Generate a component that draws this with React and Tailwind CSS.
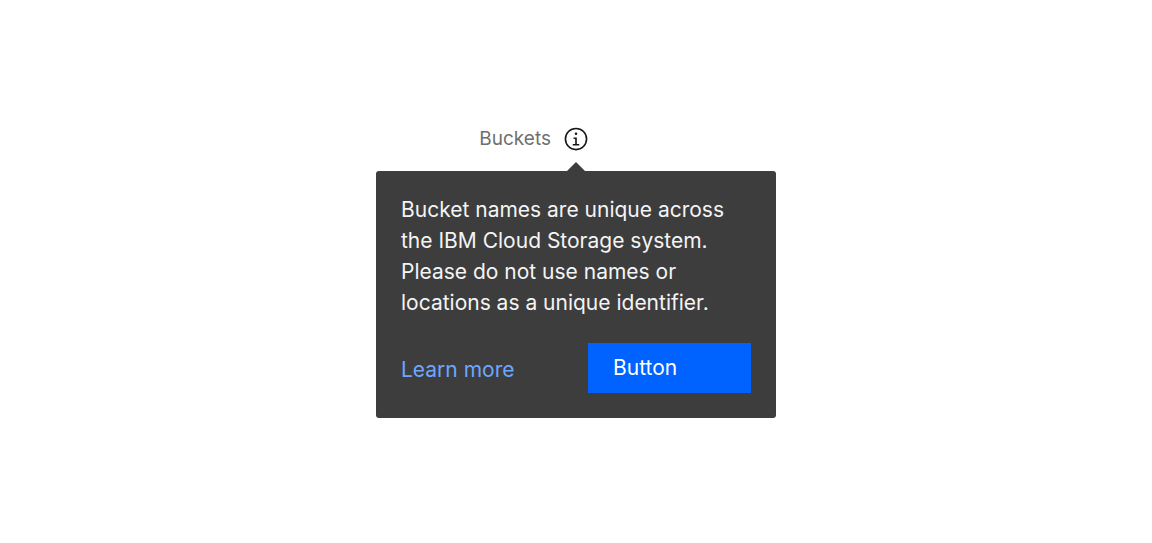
function InformationIcon() {
  return (
    <svg className="size-[26px]" viewBox="0 0 32 32" fill="currentColor" aria-hidden="true">
      <path d="M17 22V14H13V16H15V22H12V24H20V22Z" />
      <path d="M16,8a1.5,1.5,0,1,0,1.5,1.5A1.5,1.5,0,0,0,16,8Z" />
      <path d="M16,30A14,14,0,1,1,30,16,14,14,0,0,1,16,30ZM16,4A12,12,0,1,0,28,16,12,12,0,0,0,16,4Z" />
    </svg>
  );
}

function Toggletip() {
  return (
    <div
      id="buckets-tip"
      className="relative mt-[19px] w-full rounded-[3px] bg-[#3d3d3d] px-[25px] pt-[23px] pb-[25px] text-[21px] leading-[31px] text-[#f4f4f4]"
    >
      <svg
        className="absolute bottom-full left-1/2 h-[9px] w-[18px] -translate-x-1/2 text-[#3d3d3d]"
        viewBox="0 0 18 9"
        fill="currentColor"
        aria-hidden="true"
      >
        <path d="M0 9L9 0L18 9Z" />
      </svg>
      <p>
        Bucket names are unique across the IBM Cloud Storage system. Please do not use names or
        locations as a unique identifier.
      </p>
      <div className="mt-[25px] flex items-end justify-between">
        <a href="#learn-more" className="pb-2 text-[#6ea6ff]">
          Learn more
        </a>
        <button type="button" className="h-[50px] w-[163px] bg-[#0062ff] px-[25px] text-left text-white">
          Button
        </button>
      </div>
    </div>
  );
}

export default function App() {
  return (
    <main className="flex min-h-screen items-center justify-center bg-white font-[Inter,sans-serif]">
      <div className="w-full max-w-[400px]">
        <div className="grid grid-cols-[1fr_auto_1fr] items-center gap-3">
          <span id="buckets-label" className="text-right text-[19px] leading-[26px] text-[#6f6f6f]">
            Buckets
          </span>
          <button
            type="button"
            className="text-[#171717]"
            aria-labelledby="buckets-label"
            aria-describedby="buckets-tip"
          >
            <InformationIcon />
          </button>
        </div>
        <Toggletip />
      </div>
    </main>
  );
}
